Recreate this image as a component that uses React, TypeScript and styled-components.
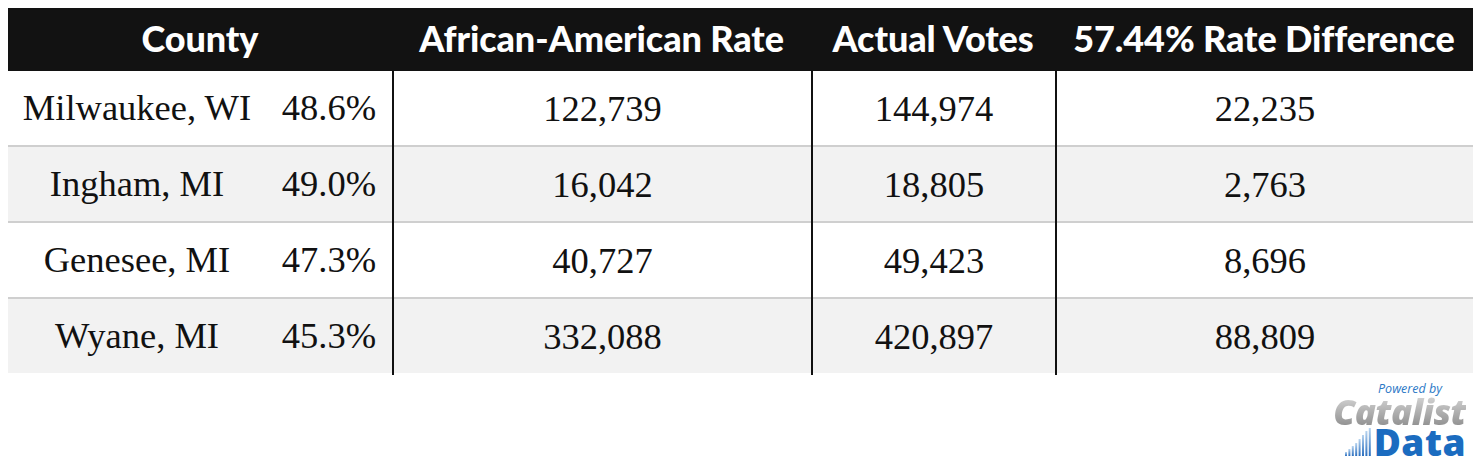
import React from "react";
import styled, { createGlobalStyle } from "styled-components";

const Global = createGlobalStyle`
  html, body { margin: 0; padding: 0; background: #ffffff; }
  body { padding: 8px; width: 1480px; box-sizing: border-box; }
`;

const Table = styled.div`
  display: flex;
  flex-direction: column;
  width: 1465px;
`;

const HeaderRow = styled.div`
  display: grid;
  grid-template-columns: 384px 419px 244px 1fr;
  height: 63px;
  background: #121212;
  align-items: center;
`;

const HeadCell = styled.div`
  font-family: "Lato", "Open Sans", sans-serif;
  font-weight: 900;
  font-size: 36px;
  color: #ffffff;
  text-align: center;
  letter-spacing: -0.1px;
  padding-bottom: 4px;
  white-space: nowrap;
`;

const Row = styled.div<{ $shade: boolean; $last: boolean }>`
  display: grid;
  grid-template-columns: 258px 126px 419px 244px 1fr;
  height: 74px;
  background: ${(p) => (p.$shade ? "#f2f2f2" : "#ffffff")};
  border-bottom: ${(p) => (p.$last ? "none" : "2px solid #cfcfcf")};
  box-sizing: content-box;
`;

const Cell = styled.div<{ $divider?: boolean }>`
  display: flex;
  align-items: center;
  justify-content: center;
  font-family: "Liberation Serif", "Times New Roman", serif;
  font-size: 36.5px;
  color: #111111;
  border-left: ${(p) => (p.$divider ? "2px solid #111111" : "none")};
  margin-bottom: ${(p) => (p.$divider ? "-2px" : "0")};
  white-space: nowrap;
  padding-bottom: 2px;
`;

const LogoArea = styled.div`
  display: flex;
  justify-content: flex-end;
  padding: 8px 6px 0 0;
`;

const Logo = styled.div`
  display: flex;
  flex-direction: column;
  align-items: flex-end;
  width: 132px;
`;

const Powered = styled.div`
  font-family: "Open Sans", sans-serif;
  font-style: italic;
  font-size: 12.5px;
  color: #2b78c6;
  align-self: center;
  margin-left: 20px;
  line-height: 15px;
`;

const Catalist = styled.div`
  font-family: "Open Sans", sans-serif;
  font-style: italic;
  font-weight: 800;
  font-size: 35px;
  line-height: 32px;
  letter-spacing: -0.5px;
  background: linear-gradient(180deg, #d4d4d4 0%, #b3b3b3 45%, #8d8d8d 100%);
  -webkit-background-clip: text;
  background-clip: text;
  color: transparent;
`;

const DataLine = styled.div`
  display: flex;
  align-items: flex-end;
  gap: 1px;
  margin-top: -2px;
`;

const DataWord = styled.div`
  font-family: "Open Sans", sans-serif;
  font-weight: 800;
  font-size: 37px;
  line-height: 31px;
  color: #1b6cc0;
  letter-spacing: 0.5px;
`;

const Bars = () => {
  const heights = [4, 7, 10, 13, 17, 21, 25, 28];
  return (
    <svg width="30" height="30" viewBox="0 0 30 30">
      <defs>
        <linearGradient id="bg" x1="0" y1="0" x2="0" y2="1">
          <stop offset="0" stopColor="#b8d4ef" />
          <stop offset="1" stopColor="#2b6fbf" />
        </linearGradient>
      </defs>
      {heights.map((h, i) => (
        <rect key={i} x={2 + i * 3.4} y={29 - h} width={2} height={h} fill="url(#bg)" />
      ))}
    </svg>
  );
};

const rows = [
  ["Milwaukee, WI", "48.6%", "122,739", "144,974", "22,235"],
  ["Ingham, MI", "49.0%", "16,042", "18,805", "2,763"],
  ["Genesee, MI", "47.3%", "40,727", "49,423", "8,696"],
  ["Wyane, MI", "45.3%", "332,088", "420,897", "88,809"],
];

export default function App() {
  return (
    <>
      <Global />
      <Table>
        <HeaderRow>
          <HeadCell>County</HeadCell>
          <HeadCell>African-American Rate</HeadCell>
          <HeadCell>Actual Votes</HeadCell>
          <HeadCell>57.44% Rate Difference</HeadCell>
        </HeaderRow>
        {rows.map((r, i) => (
          <Row key={r[0]} $shade={i % 2 === 1} $last={i === rows.length - 1}>
            <Cell>{r[0]}</Cell>
            <Cell>{r[1]}</Cell>
            <Cell $divider>{r[2]}</Cell>
            <Cell $divider>{r[3]}</Cell>
            <Cell $divider>{r[4]}</Cell>
          </Row>
        ))}
      </Table>
      <LogoArea>
        <Logo>
          <Powered>Powered by</Powered>
          <Catalist>Catalist</Catalist>
          <DataLine>
            <Bars />
            <DataWord>Data</DataWord>
          </DataLine>
        </Logo>
      </LogoArea>
    </>
  );
}
